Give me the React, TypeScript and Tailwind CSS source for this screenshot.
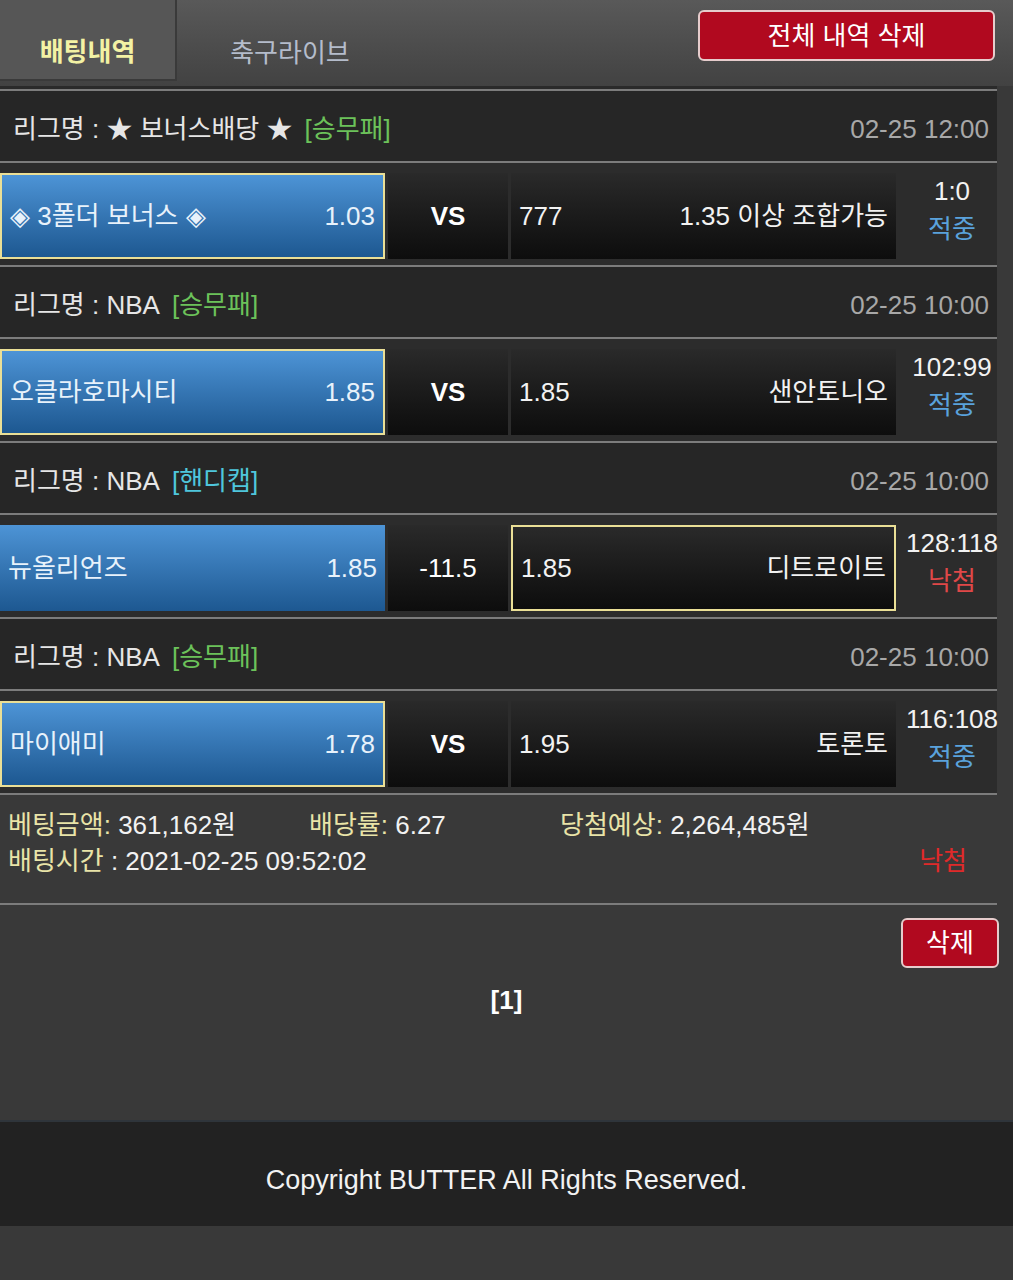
import React from "react";

type Game = {
  league: string;
  kind: string;
  kindColor: string;
  date: string;
  home: string;
  homeOdds: string;
  mid: string;
  midBold: boolean;
  awayOdds: string;
  away: string;
  pick: "home" | "away";
  score: string;
  result: "적중" | "낙첨";
};

const games: Game[] = [
  {
    league: "★ 보너스배당 ★",
    kind: "[승무패]",
    kindColor: "text-[#6cc25a]",
    date: "02-25 12:00",
    home: "◈ 3폴더 보너스 ◈",
    homeOdds: "1.03",
    mid: "VS",
    midBold: true,
    awayOdds: "777",
    away: "1.35 이상 조합가능",
    pick: "home",
    score: "1:0",
    result: "적중",
  },
  {
    league: "NBA",
    kind: "[승무패]",
    kindColor: "text-[#6cc25a]",
    date: "02-25 10:00",
    home: "오클라호마시티",
    homeOdds: "1.85",
    mid: "VS",
    midBold: true,
    awayOdds: "1.85",
    away: "샌안토니오",
    pick: "home",
    score: "102:99",
    result: "적중",
  },
  {
    league: "NBA",
    kind: "[핸디캡]",
    kindColor: "text-[#4fc6dc]",
    date: "02-25 10:00",
    home: "뉴올리언즈",
    homeOdds: "1.85",
    mid: "-11.5",
    midBold: false,
    awayOdds: "1.85",
    away: "디트로이트",
    pick: "away",
    score: "128:118",
    result: "낙첨",
  },
  {
    league: "NBA",
    kind: "[승무패]",
    kindColor: "text-[#6cc25a]",
    date: "02-25 10:00",
    home: "마이애미",
    homeOdds: "1.78",
    mid: "VS",
    midBold: true,
    awayOdds: "1.95",
    away: "토론토",
    pick: "home",
    score: "116:108",
    result: "적중",
  },
];

const Line = () => <div className="h-[2px] w-[997px] bg-[#7c7c7c]" />;

const GameBlock = ({ g }: { g: Game }) => {
  return (
    <div>
      <div className="flex h-[70px] w-[997px] items-center justify-between bg-[#262626] pl-[13px] pr-[8px] pt-[5px]">
        <p className="text-[#e6e6e6]">
          리그명 : {g.league}
          <span className={`ml-[12px] ${g.kindColor}`}>{g.kind}</span>
        </p>
        <p className="text-[#a8a8a8]">{g.date}</p>
      </div>
      <Line />
      <div className="flex h-[102px] w-[997px] items-center bg-[#2c2c2c] pt-[4px]">
        <div
          className={
            "flex h-[86px] w-[385px] shrink-0 items-center justify-between bg-gradient-to-b from-[#4d94d6] to-[#1d5891] px-[8px] text-[#e8f2fb] " +
            (g.pick === "home" ? "border-2 border-[#eadf96]" : "")
          }
        >
          <span>{g.home}</span>
          <span>{g.homeOdds}</span>
        </div>
        <div
          className={
            "ml-[3px] flex h-[86px] w-[120px] shrink-0 items-center justify-center bg-gradient-to-b from-[#2a2a2a] to-[#0d0d0d] text-white " +
            (g.midBold ? "font-bold" : "")
          }
        >
          {g.mid}
        </div>
        <div
          className={
            "ml-[3px] flex h-[86px] w-[385px] shrink-0 items-center justify-between bg-gradient-to-b from-[#2a2a2a] to-[#0d0d0d] px-[8px] text-[#f2f2f2] " +
            (g.pick === "away" ? "border-2 border-[#eadf96]" : "")
          }
        >
          <span>{g.awayOdds}</span>
          <span>{g.away}</span>
        </div>
        <div className="flex w-[112px] shrink-0 flex-col items-center pb-[12px] leading-[38px]">
          <span className="text-[#f2f2f2]">{g.score}</span>
          <span className={g.result === "적중" ? "text-[#5aa2dc]" : "text-[#e04848]"}>
            {g.result}
          </span>
        </div>
      </div>
      <Line />
    </div>
  );
};

export default function App() {
  return (
    <div
      className="min-h-[1280px] w-[1013px] bg-[#393939] text-[26px] leading-none"
      style={{ fontFamily: '"Liberation Sans", "Noto Sans CJK KR", sans-serif' }}
    >
      <header className="flex h-[86px] items-start justify-between bg-gradient-to-b from-[#595959] to-[#424242]">
        <div className="flex">
          <div className="flex h-[81px] w-[177px] items-center justify-center border-r-2 border-b-2 border-[#3a3a3a] bg-[#565656] pt-[24px] font-bold text-[#f3f2a4]">
            배팅내역
          </div>
          <div className="flex h-[81px] w-[226px] items-center justify-center pt-[24px] text-[#b4bccb]">
            축구라이브
          </div>
        </div>
        <button className="mr-[18px] mt-[10px] h-[51px] w-[297px] rounded-md border-2 border-[#e6cccc] bg-[#b1091f] text-white">
          전체 내역 삭제
        </button>
      </header>
      <div className="h-[3px] w-[997px] bg-[#2a2a2a]" />
      <Line />

      {games.map((g, i) => (
        <GameBlock key={i} g={g} />
      ))}

      <div className="w-[997px] px-[8px] pt-[12px] pb-[24px]">
        <div className="flex h-[36px] items-center">
          <p className="w-[301px]">
            <span className="text-[#e9e4a8]">베팅금액:</span>
            <span className="text-[#f2f2f2]"> 361,162원</span>
          </p>
          <p className="w-[251px]">
            <span className="text-[#e9e4a8]">배당률:</span>
            <span className="text-[#f2f2f2]"> 6.27</span>
          </p>
          <p>
            <span className="text-[#e9e4a8]">당첨예상:</span>
            <span className="text-[#f2f2f2]"> 2,264,485원</span>
          </p>
        </div>
        <div className="flex h-[36px] items-center justify-between">
          <p>
            <span className="text-[#e9e4a8]">배팅시간</span>
            <span className="text-[#f2f2f2]"> : 2021-02-25 09:52:02</span>
          </p>
          <span className="mr-[22px] text-[#e02a2a]">낙첨</span>
        </div>
      </div>
      <Line />

      <div className="relative h-[215px]">
        <button className="absolute right-[14px] top-[13px] h-[50px] w-[98px] rounded-md border-2 border-[#e6cccc] bg-[#b1091f] text-white">
          삭제
        </button>
        <p className="pt-[82px] text-center font-bold text-white">[1]</p>
      </div>

      <footer className="flex h-[106px] items-center justify-center border-t-2 border-[#2f353b] bg-[#222222] pt-[12px] text-[27px] text-[#f2f2f2]">
        Copyright BUTTER All Rights Reserved.
      </footer>
    </div>
  );
}
